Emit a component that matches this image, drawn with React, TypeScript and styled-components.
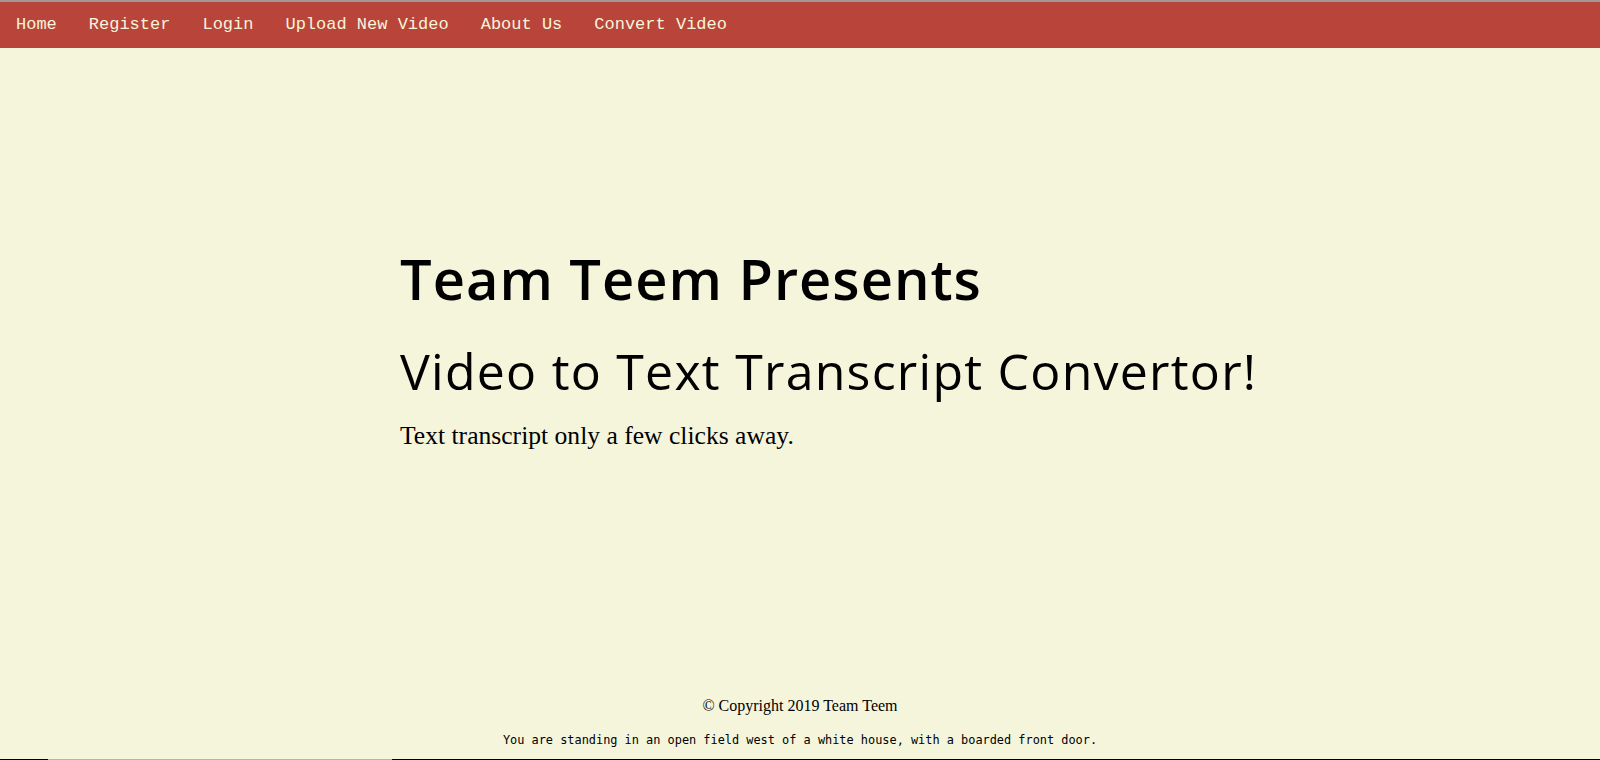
import React from "react";
import styled, { createGlobalStyle } from "styled-components";

const Global = createGlobalStyle`
  html, body { margin: 0; padding: 0; }
  body {
    background: #f5f5dc;
    color: #000;
    font-family: "Liberation Serif", "Times New Roman", serif;
    overflow: hidden;
  }
`;

const Page = styled.div`
  min-height: 760px;
  height: 760px;
  display: flex;
  flex-direction: column;
  border-top: 2px solid #a09a96;
  box-sizing: border-box;
`;

const Nav = styled.nav`
  display: flex;
  align-items: center;
  height: 46px;
  background: #b94439;
  padding: 0;
`;

const NavLink = styled.a`
  display: block;
  padding: 0 16px;
  color: #f5f5dc;
  text-decoration: none;
  font-family: "Liberation Mono", "Courier New", monospace;
  font-size: 17px;
  line-height: 46px;
`;

const Main = styled.main`
  flex: 1;
  display: flex;
  flex-direction: column;
  padding: 0 0 0 400px;
`;

const Hero = styled.section`
  margin-top: 190px;
  display: flex;
  flex-direction: column;
`;

const Title = styled.h1`
  margin: 0;
  font-family: "Open Sans", "DejaVu Sans", sans-serif;
  font-weight: 600;
  font-size: 56px;
  letter-spacing: 1px;
  line-height: 80px;
  white-space: nowrap;
`;

const Subtitle = styled.h2`
  margin: 18px 0 0;
  font-family: "Open Sans", "DejaVu Sans", sans-serif;
  font-weight: 400;
  font-size: 50px;
  letter-spacing: 1.25px;
  line-height: 70px;
  white-space: nowrap;
`;

const Lead = styled.p`
  margin: 12px 0 0;
  font-size: 25.6px;
  line-height: 36px;
`;

const Footer = styled.footer`
  display: flex;
  flex-direction: column;
  align-items: center;
  padding-bottom: 10px;
`;

const Copyright = styled.p`
  margin: 0;
  font-size: 16px;
  line-height: 24px;
`;

const Tagline = styled.p`
  margin: 13px 0 0;
  font-family: "DejaVu Sans Mono", monospace;
  font-size: 11.9px;
  line-height: 18px;
`;

const BottomEdge = styled.div`
  height: 1px;
  background: linear-gradient(to right, #000 0 48px, #b4b4b4 48px 392px, #000 392px);
`;

const links = ["Home", "Register", "Login", "Upload New Video", "About Us", "Convert Video"];

export default function App() {
  return (
    <>
      <Global />
      <Page>
        <Nav>
          {links.map((l) => (
            <NavLink key={l} href="#">
              {l}
            </NavLink>
          ))}
        </Nav>
        <Main>
          <Hero>
            <Title>Team Teem Presents</Title>
            <Subtitle>Video to Text Transcript Convertor!</Subtitle>
            <Lead>Text transcript only a few clicks away.</Lead>
          </Hero>
        </Main>
        <Footer>
          <Copyright>© Copyright 2019 Team Teem</Copyright>
          <Tagline>
            You are standing in an open field west of a white house, with a boarded front door.
          </Tagline>
        </Footer>
        <BottomEdge />
      </Page>
    </>
  );
}
